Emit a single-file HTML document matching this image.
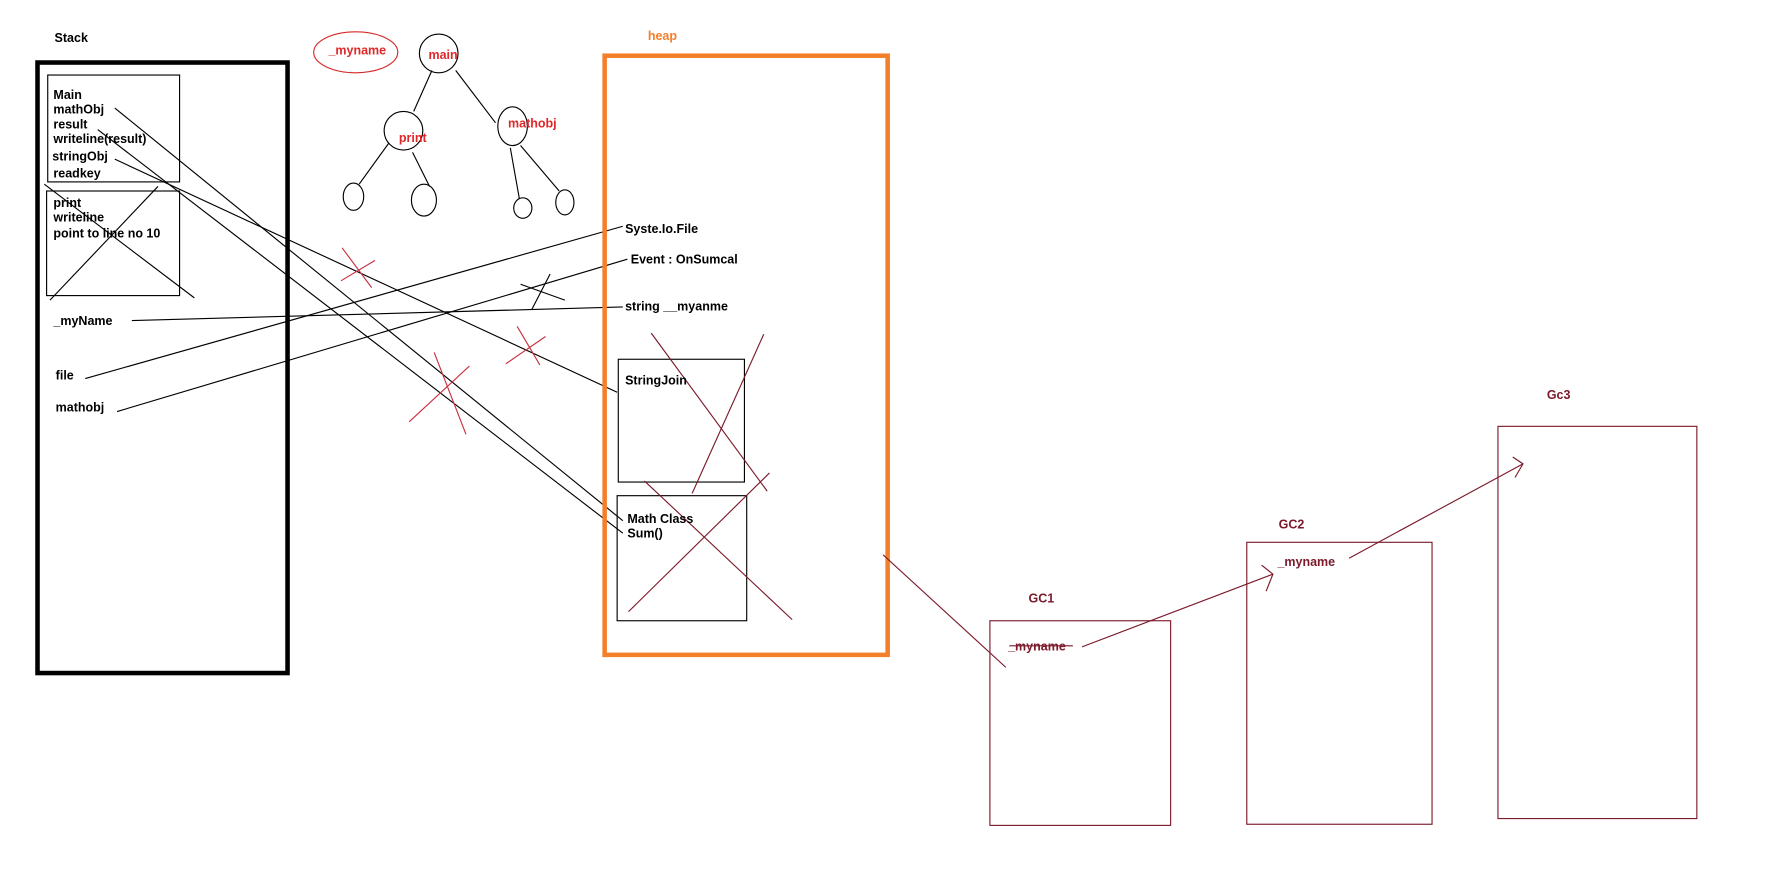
<!DOCTYPE html>
<html><head><meta charset="utf-8"><style>html,body{margin:0;padding:0;background:#fff;overflow:hidden}svg{display:block}text{font-family:"Liberation Sans",Arial,sans-serif;font-size:11px;font-weight:bold}</style></head>
<body>
<svg width="1773" height="872" viewBox="0 0 1560 767" preserveAspectRatio="none" xmlns="http://www.w3.org/2000/svg">
<rect width="1560" height="767" fill="#fff"/>
<g fill="none" stroke="#000" stroke-width="1">
<rect x="33" y="55" width="220" height="537" stroke-width="4"/>
<rect x="42" y="66" width="116" height="94"/>
<rect x="41" y="168" width="117" height="92"/>
<line x1="101" y1="95" x2="548" y2="458"/>
<line x1="86" y1="114" x2="548" y2="469"/>
<line x1="101" y1="140" x2="543" y2="345"/>
<line x1="39" y1="162" x2="171" y2="262"/>
<line x1="139" y1="164" x2="44" y2="264"/>
<line x1="116" y1="282" x2="548" y2="270"/>
<line x1="75" y1="333" x2="548" y2="199"/>
<line x1="103" y1="362" x2="552" y2="228"/>
<line x1="468" y1="272" x2="484" y2="241"/>
<line x1="458" y1="250" x2="497" y2="264"/>
<rect x="544" y="316" width="111" height="108"/>
<rect x="543" y="436" width="114" height="110"/>
<circle cx="386" cy="47" r="17"/>
<circle cx="355" cy="115" r="17"/>
<ellipse cx="451" cy="111" rx="13" ry="17"/>
<line x1="380" y1="62" x2="364" y2="98"/>
<line x1="401" y1="62" x2="436" y2="108"/>
<ellipse cx="311" cy="173" rx="9" ry="12"/>
<ellipse cx="373" cy="176" rx="11" ry="14"/>
<ellipse cx="460" cy="183" rx="8" ry="9"/>
<ellipse cx="497" cy="178" rx="8" ry="11"/>
<line x1="342" y1="126" x2="316" y2="162"/>
<line x1="363" y1="134" x2="378" y2="164"/>
<line x1="449" y1="130" x2="457" y2="175"/>
<line x1="458" y1="128" x2="492" y2="168"/>
</g>
<rect x="532" y="49" width="249" height="527" fill="none" stroke="#f47f2a" stroke-width="4"/>
<ellipse cx="313" cy="46" rx="37" ry="18" fill="none" stroke="#d42a2a"/>
<g stroke="#c83040" stroke-width="1">
<line x1="301" y1="218" x2="327" y2="253"/><line x1="300" y1="247" x2="330" y2="229"/>
<line x1="455" y1="287" x2="475" y2="321"/><line x1="445" y1="320" x2="480" y2="296"/>
<line x1="382" y1="310" x2="410" y2="382"/><line x1="360" y1="371" x2="413" y2="322"/>
</g>
<g stroke="#7b1a2a" stroke-width="1" fill="none">
<line x1="573" y1="293" x2="675" y2="432"/><line x1="672" y1="294" x2="609" y2="434"/>
<line x1="677" y1="416" x2="553" y2="538"/><line x1="567" y1="423" x2="697" y2="545"/>
<line x1="777" y1="488" x2="885" y2="587"/>
<rect x="871" y="546" width="159" height="180"/>
<rect x="1097" y="477" width="163" height="248"/>
<rect x="1318" y="375" width="175" height="345"/>
<line x1="952" y1="569" x2="1120" y2="505"/>
<polyline points="1110,497 1120,505 1114,520"/>
<line x1="1187" y1="491" x2="1340" y2="408"/>
<polyline points="1331,402 1340,408 1333,420"/>
<line x1="888" y1="568" x2="944" y2="568"/>
</g>
<g fill="#000">
<text x="48" y="37">Stack</text>
<text x="47" y="87">Main</text><text x="47" y="100">mathObj</text><text x="47" y="113">result</text>
<text x="47" y="126">writeline(result)</text><text x="46" y="141">stringObj</text><text x="47" y="156">readkey</text>
<text x="47" y="182">print</text><text x="47" y="195">writeline</text><text x="47" y="209">point to line no 10</text>
<text x="47" y="286">_myName</text><text x="49" y="334">file</text><text x="49" y="362">mathobj</text>
<text x="550" y="205">Syste.Io.File</text><text x="555" y="232">Event : OnSumcal</text>
<text x="550" y="273">string __myanme</text><text x="550" y="338">StringJoin</text>
<text x="552" y="460">Math Class</text><text x="552" y="473">Sum()</text>
</g>
<g fill="#e0282a">
<text x="289" y="48">_myname</text><text x="377" y="52">main</text>
<text x="351" y="125">print</text><text x="447" y="112">mathobj</text>
</g>
<text x="570" y="35" fill="#f47f2a">heap</text>
<g fill="#7b1a2a">
<text x="905" y="530">GC1</text><text x="1125" y="465">GC2</text><text x="1361" y="351">Gc3</text>
<text x="887" y="572">_myname</text><text x="1124" y="498">_myname</text>
</g>
</svg>
</body></html>
